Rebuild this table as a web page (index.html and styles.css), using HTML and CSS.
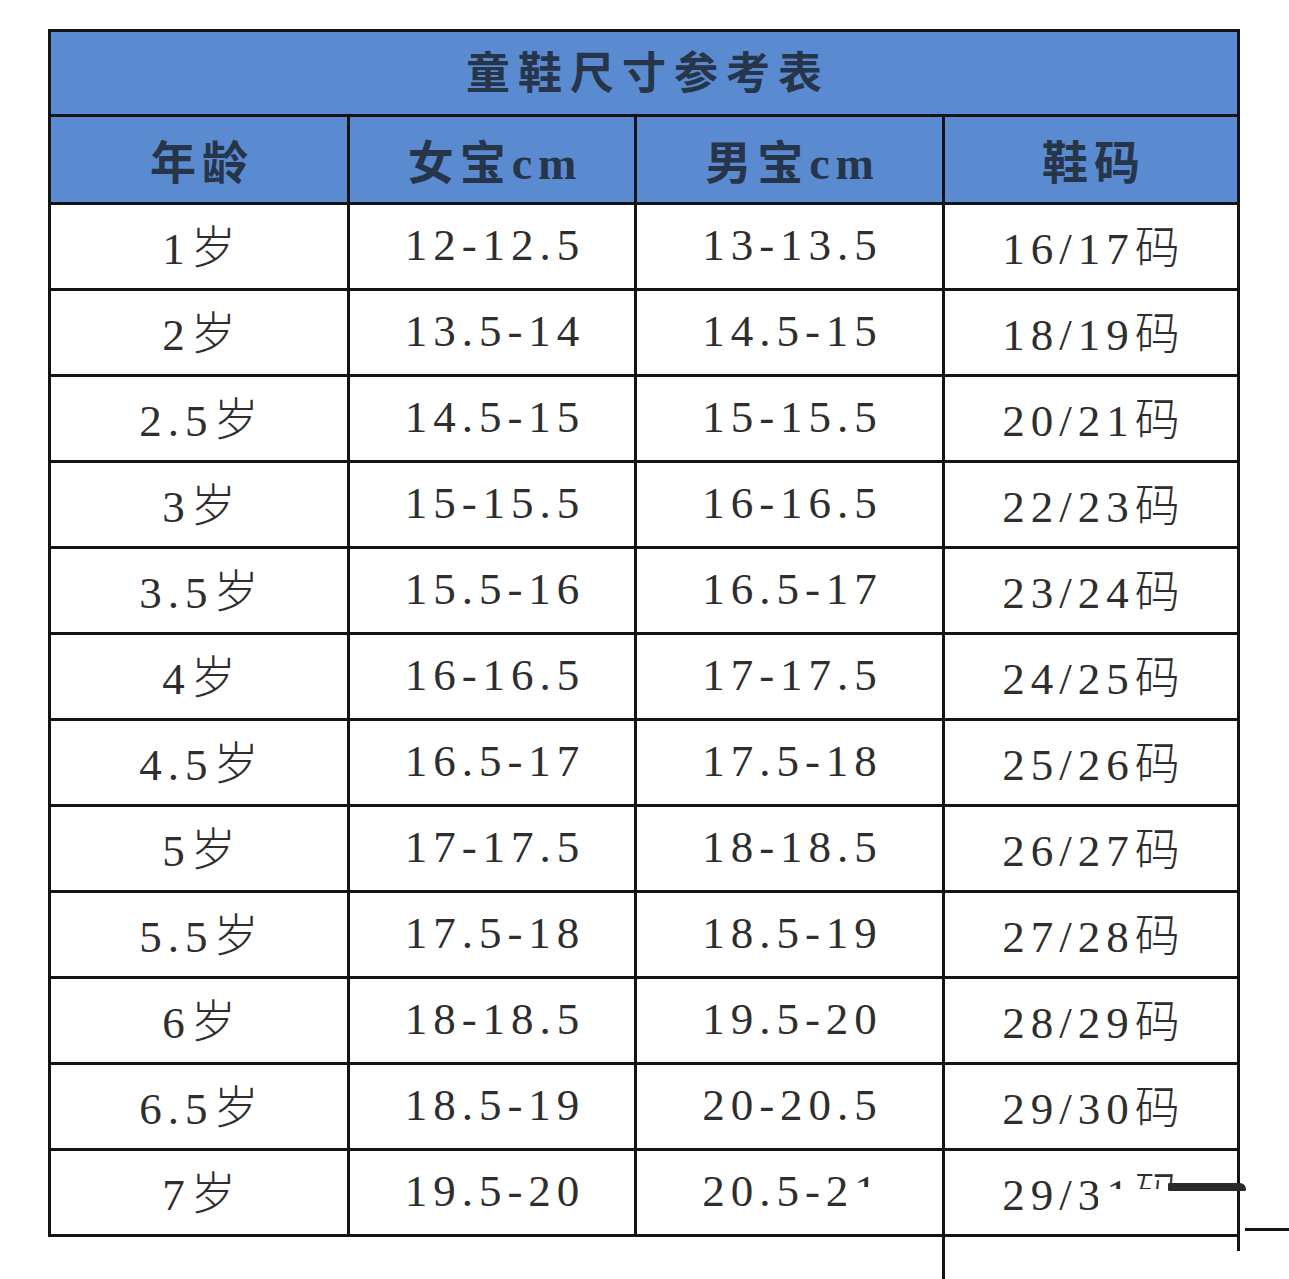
FILE: index.html
```html
<!DOCTYPE html>
<html lang="zh">
<head>
<meta charset="utf-8">
<title>童鞋尺寸参考表</title>
<link rel="stylesheet" href="styles.css">
</head>
<body>
<div class="wrap">
  <div class="sheet">
    <div class="title">童鞋尺寸参考表</div>
    <div class="head">年龄</div>
    <div class="head">女宝cm</div>
    <div class="head">男宝cm</div>
    <div class="head">鞋码</div>

    <div class="cell">1岁</div><div class="cell">12-12.5</div><div class="cell">13-13.5</div><div class="cell">16/17码</div>
    <div class="cell">2岁</div><div class="cell">13.5-14</div><div class="cell">14.5-15</div><div class="cell">18/19码</div>
    <div class="cell">2.5岁</div><div class="cell">14.5-15</div><div class="cell">15-15.5</div><div class="cell">20/21码</div>
    <div class="cell">3岁</div><div class="cell">15-15.5</div><div class="cell">16-16.5</div><div class="cell">22/23码</div>
    <div class="cell">3.5岁</div><div class="cell">15.5-16</div><div class="cell">16.5-17</div><div class="cell">23/24码</div>
    <div class="cell">4岁</div><div class="cell">16-16.5</div><div class="cell">17-17.5</div><div class="cell">24/25码</div>
    <div class="cell">4.5岁</div><div class="cell">16.5-17</div><div class="cell">17.5-18</div><div class="cell">25/26码</div>
    <div class="cell">5岁</div><div class="cell">17-17.5</div><div class="cell">18-18.5</div><div class="cell">26/27码</div>
    <div class="cell">5.5岁</div><div class="cell">17.5-18</div><div class="cell">18.5-19</div><div class="cell">27/28码</div>
    <div class="cell">6岁</div><div class="cell">18-18.5</div><div class="cell">19.5-20</div><div class="cell">28/29码</div>
    <div class="cell">6.5岁</div><div class="cell">18.5-19</div><div class="cell">20-20.5</div><div class="cell">29/30码</div>
    <div class="cell">7岁</div><div class="cell">19.5-20</div><div class="cell">20.5-21</div><div class="cell">29/31码</div>
  </div>
  <div class="erase erase-a"></div>
  <div class="erase erase-b"></div>
  <div class="smear"></div>
  <div class="line line-v1"></div>
  <div class="line line-v2"></div>
  <div class="line line-h"></div>
</div>
</body>
</html>
```

FILE: styles.css
```css
html, body {
  margin: 0;
  padding: 0;
  background: #ffffff;
}

body {
  box-sizing: border-box;
  min-height: 1279px;
  padding: 29px 0 0 48px;
  font-family: "Liberation Serif", "Noto Sans CJK SC", serif;
  color: #2e2e2e;
}

.wrap {
  position: relative;
  width: 1192px;
  height: 1250px;
}

.sheet {
  display: grid;
  grid-template-columns: 296px 284px 305px 292px;
  grid-template-rows: 82px 85px repeat(12, 83px);
  gap: 3px;
  padding: 3px;
  background: #121418;
}

.title {
  grid-column: 1 / -1;
  background: #5a8bd0;
  color: #27354a;
  font-family: "Noto Sans CJK SC", sans-serif;
  font-weight: 700;
  font-size: 44px;
  letter-spacing: 8px;
  padding: 0 0 6px 8px;
  display: flex;
  align-items: center;
  justify-content: center;
}

.head {
  background: #5a8bd0;
  color: #27354a;
  font-family: "Liberation Serif", "Noto Sans CJK SC", serif;
  font-weight: 700;
  font-size: 46px;
  letter-spacing: 6px;
  padding: 0 0 2px 6px;
  display: flex;
  align-items: center;
  justify-content: center;
}

.cell {
  background: #ffffff;
  font-size: 45px;
  font-weight: 300;
  letter-spacing: 6px;
  padding: 0 0 4px 6px;
  display: flex;
  align-items: center;
  justify-content: center;
}

.erase {
  position: absolute;
  background: #ffffff;
}

.erase-a {
  left: 810px;
  top: 1158px;
  width: 84px;
  height: 40px;
}

.erase-b {
  left: 1050px;
  top: 1160px;
  width: 138px;
  height: 38px;
}

.smear {
  position: absolute;
  left: 1120px;
  top: 1154px;
  width: 78px;
  height: 8px;
  background: #2a2a2a;
  border-radius: 2px 10px 3px 2px;
}

.line {
  position: absolute;
  background: #121418;
}

.line-v1 {
  left: 894px;
  top: 1206px;
  width: 3px;
  height: 44px;
}

.line-v2 {
  left: 1189px;
  top: 1206px;
  width: 3px;
  height: 16px;
}

.line-h {
  left: 1197px;
  top: 1199px;
  width: 44px;
  height: 3px;
}
```
